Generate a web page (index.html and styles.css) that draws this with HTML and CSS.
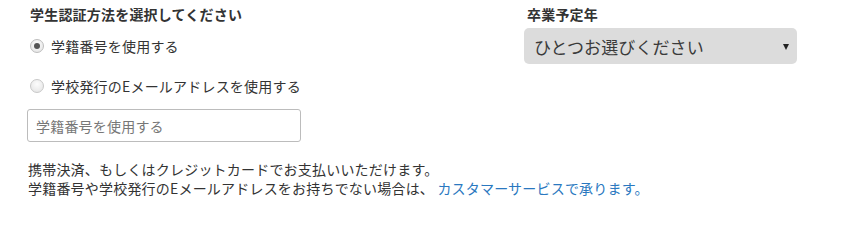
FILE: index.html
```html
<!DOCTYPE html>
<html lang="ja">
<head>
<meta charset="utf-8">
<link rel="stylesheet" href="styles.css">
</head>
<body>
<div class="page">
  <div class="cols">
    <div class="left">
      <div class="heading">学生認証方法を選択してください</div>
      <label class="radio-row first"><span class="radio checked"></span><span>学籍番号を使用する</span></label>
      <label class="radio-row"><span class="radio"></span><span>学校発行のEメールアドレスを使用する</span></label>
      <div class="field"><span class="placeholder">学籍番号を使用する</span></div>
    </div>
    <div class="right">
      <div class="heading">卒業予定年</div>
      <div class="select"><span>ひとつお選びください</span><span class="arrow"></span></div>
    </div>
  </div>
  <p class="note">携帯決済、もしくはクレジットカードでお支払いいただけます。<br>学籍番号や学校発行のEメールアドレスをお持ちでない場合は、 <a class="link">カスタマーサービスで承ります。</a></p>
</div>
</body>
</html>
```
FILE: styles.css
```css
html, body {
  margin: 0;
  padding: 0;
  background: #fff;
}
body {
  font-family: "Noto Sans CJK JP", "Noto Sans", sans-serif;
  color: #333;
  font-size: 14px;
  letter-spacing: 0.2px;
}
.page {
  padding: 4px 0 0 28px;
  width: 822px;
}
.cols {
  display: grid;
  grid-template-columns: 496px 273px;
}
.left {
  display: flex;
  flex-direction: column;
}
.heading {
  font-weight: bold;
  font-size: 14px;
  line-height: 20px;
  padding-left: 2px;
}
.radio-row {
  display: flex;
  align-items: center;
  gap: 7px;
  line-height: 20px;
  padding-left: 2px;
}
.radio-row.first {
  margin-top: 12px;
}
.radio-row + .radio-row {
  margin-top: 20px;
}
.radio {
  width: 12px;
  height: 12px;
  border-radius: 50%;
  border: 1px solid #c8c8c8;
  background: radial-gradient(circle at 50% 35%, #fcfcfc 0%, #e2e2e2 100%);
  display: flex;
  align-items: center;
  justify-content: center;
  flex: none;
}
.radio.checked {
  border-color: #bdbdbd;
}
.radio.checked::after {
  content: "";
  width: 6px;
  height: 6px;
  border-radius: 50%;
  background: #555;
}
.field {
  margin-top: 13px;
  height: 31px;
  margin-left: -1px;
  border: 1px solid #bcbcbc;
  border-radius: 3px;
  display: flex;
  align-items: center;
  padding-left: 8px;
  box-sizing: content-box;
  width: 264px;
}
.placeholder {
  color: #777;
  font-size: 14px;
}
.right {
  display: flex;
  flex-direction: column;
}
.right .heading {
  padding-left: 3px;
}
.select {
  margin-top: 4px;
  height: 36px;
  width: 273px;
  box-sizing: border-box;
  background: #dcdcdc;
  border-radius: 5px;
  display: flex;
  align-items: center;
  justify-content: space-between;
  padding: 0 8px 0 10px;
  font-size: 17px;
  color: #3a3a3a;
  letter-spacing: 0.1px;
}
.arrow {
  width: 0;
  height: 0;
  border-left: 3px solid transparent;
  border-right: 3px solid transparent;
  border-top: 6px solid #222;
  margin-top: 2px;
}
.note {
  margin: 18px 0 0 0;
  font-size: 14px;
  line-height: 19px;
}
.link {
  color: #2a78c0;
  text-decoration: none;
}
```
